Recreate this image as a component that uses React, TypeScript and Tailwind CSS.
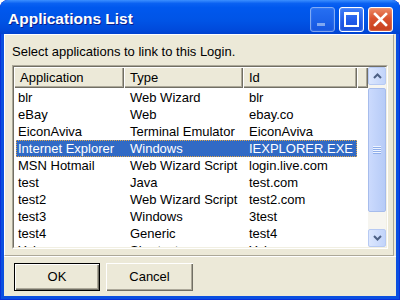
import { ReactNode } from "react";

const rows: [string, string, string][] = [
    ["blr", "Web Wizard", "blr"],
    ["eBay", "Web", "ebay.co"],
    ["EiconAviva", "Terminal Emulator", "EiconAviva"],
    ["Internet Explorer", "Windows", "IEXPLORER.EXE"],
    ["MSN Hotmail", "Web Wizard Script", "login.live.com"],
    ["test", "Java", "test.com"],
    ["test2", "Web Wizard Script", "test2.com"],
    ["test3", "Windows", "3test"],
    ["test4", "Generic", "test4"],
    ["Yahoo", "Shortcut", "Yahoo"],
];

const selected = 3;

function CaptionButton({
    children,
    className = "",
}: {
    children: ReactNode;
    className?: string;
}) {
    return (
        <div
            className={
                "w-[25px] h-[25px] rounded-[3px] border border-white flex items-center justify-center " +
                className
            }
        >
            {children}
        </div>
    );
}

function TitleBar() {
    return (
        <div className="h-[34px] pt-[4px] pl-[8px] pr-[7px] flex items-center rounded-t-[8px] bg-[linear-gradient(to_bottom,#3C8FFF_0%,#0A61F2_10%,#0058EE_22%,#0054E6_60%,#004ADB_88%,#0042CF_100%)]">
            <span className="flex-1 font-bold text-white text-[15.5px] leading-[18px] [text-shadow:1px_1px_0_#0A1E8C]">
                Applications List
            </span>
            <div className="flex gap-[4px]">
                <CaptionButton className="opacity-50 bg-[linear-gradient(to_bottom,#4C86F6,#2B63E6)] shadow-[inset_0_0_2px_#9DBBFA]">
                    <svg width="23" height="23" viewBox="0 0 23 23">
                        <rect x="6" y="15" width="8" height="3" fill="#fff" />
                    </svg>
                </CaptionButton>
                <CaptionButton className="bg-[linear-gradient(to_bottom,#3E7DF8,#1F58E8_60%,#1A4FD9)] shadow-[inset_0_0_2px_#8DB1FA]">
                    <svg width="23" height="23" viewBox="0 0 23 23">
                        <rect x="5" y="5" width="13" height="13" fill="none" stroke="#fff" strokeWidth="2" />
                        <rect x="5" y="4" width="13" height="3" fill="#fff" />
                    </svg>
                </CaptionButton>
                <CaptionButton className="bg-[linear-gradient(to_bottom,#EC8A66,#DA5330_45%,#C6401E)] shadow-[inset_0_0_2px_#F5B49C]">
                    <svg width="23" height="23" viewBox="0 0 23 23">
                        <path
                            d="M6 6 L17 17 M17 6 L6 17"
                            stroke="#fff"
                            strokeWidth="2.6"
                            strokeLinecap="square"
                        />
                    </svg>
                </CaptionButton>
            </div>
        </div>
    );
}

function HeaderCell({ label, w }: { label: string; w: string }) {
    return (
        <div
            className={
                "h-full flex items-center pl-[6px] bg-[#ECE9D8] shadow-[inset_1px_1px_0_#fff,inset_-1px_-1px_0_#716F64,inset_-2px_-2px_0_#ACA899] " +
                w
            }
        >
            {label}
        </div>
    );
}

function ScrollArrow({ up }: { up?: boolean }) {
    return (
        <div className="h-[18px] rounded-[2px] border border-[#B7CAF3] bg-[linear-gradient(to_right,#DCE7FE,#C2D4FA)] flex items-center justify-center">
            <svg width="9" height="6" viewBox="0 0 9 6">
                <path
                    d={up ? "M1 5 L4.5 1.5 L8 5" : "M1 1 L4.5 4.5 L8 1"}
                    fill="none"
                    stroke="#4D6185"
                    strokeWidth="2"
                />
            </svg>
        </div>
    );
}

function ScrollBar() {
    return (
        <div className="w-[18px] h-full flex flex-col bg-[#F6F5F0]">
            <ScrollArrow up />
            <div className="mt-[3px] h-[124px] rounded-[2px] border border-[#A6BCEC] bg-[linear-gradient(to_right,#CBDAFD,#B6CBF7)] flex flex-col items-center justify-center gap-[1px]">
                {[0, 1, 2, 3].map((i) => (
                    <div key={i} className="w-[8px] h-[1px] bg-[#8FAEEA] shadow-[0_-1px_0_#EEF4FF]" />
                ))}
            </div>
            <div className="flex-1" />
            <ScrollArrow />
        </div>
    );
}

function ListView() {
    return (
        <div className="mt-[6px] h-[184px] border-t border-l border-t-[#ACA899] border-l-[#ACA899] border-b border-r border-white">
            <div className="h-full border-t border-l border-t-[#716F64] border-l-[#716F64] border-b border-r border-b-[#F1EFE2] border-r-[#F1EFE2] bg-white flex">
                <div className="flex-1 overflow-hidden">
                    <div className="h-[21px] flex">
                        <HeaderCell label="Application" w="w-[110px]" />
                        <HeaderCell label="Type" w="w-[119px]" />
                        <HeaderCell label="Id" w="w-[114px]" />
                        <HeaderCell label="" w="flex-1" />
                    </div>
                    <div className="pt-[1px]">
                        {rows.map((r, i) => (
                            <div
                                key={r[0]}
                                className={
                                    "ml-[2px] w-[341px] h-[17px] flex items-center border leading-[15px] " +
                                    (i === selected
                                        ? "bg-[#316AC5] text-white border-dotted border-[#E0A64A]"
                                        : "border-transparent")
                                }
                            >
                                <span className="w-[107px] pl-[1px] whitespace-nowrap">{r[0]}</span>
                                <span className="w-[119px] pl-[6px] whitespace-nowrap">{r[1]}</span>
                                <span className="flex-1 pl-[6px] whitespace-nowrap">{r[2]}</span>
                            </div>
                        ))}
                    </div>
                </div>
                <ScrollBar />
            </div>
        </div>
    );
}

export default function App() {
    return (
        <div className="w-[400px] h-[300px] flex flex-col rounded-t-[8px] bg-[#0A4FE0] shadow-[inset_1px_0_0_#0831D9,inset_-1px_0_0_#0831D9,inset_0_-1px_0_#0831D9] overflow-hidden font-['Liberation_Sans',Arial,sans-serif] text-[13px] text-black">
            <TitleBar />
            <div className="flex-1 mx-[4px] mb-[4px] bg-[#ECE9D8] flex flex-col">
                <div className="h-[222px] mr-[2px] pl-[7px] pr-[5px] flex flex-col border border-t-white border-l-white border-r-[#ACA899] border-b-[#ACA899]">
                    <p className="mt-[10px] leading-[14px]">
                        Select applications to link to this Login.
                    </p>
                    <ListView />
                </div>
                <div className="flex-1 border-t border-white flex gap-[6px] pl-[10px] pt-[6px]">
                    <button className="w-[86px] h-[28px] bg-[#ECE9D8] border border-black shadow-[inset_1px_1px_0_#fff,inset_-1px_-1px_0_#716F64,inset_-2px_-2px_0_#ACA899]">
                        OK
                    </button>
                    <button className="w-[87px] h-[28px] bg-[#ECE9D8] shadow-[inset_1px_1px_0_#fff,inset_-1px_-1px_0_#716F64,inset_-2px_-2px_0_#ACA899]">
                        Cancel
                    </button>
                </div>
            </div>
        </div>
    );
}
